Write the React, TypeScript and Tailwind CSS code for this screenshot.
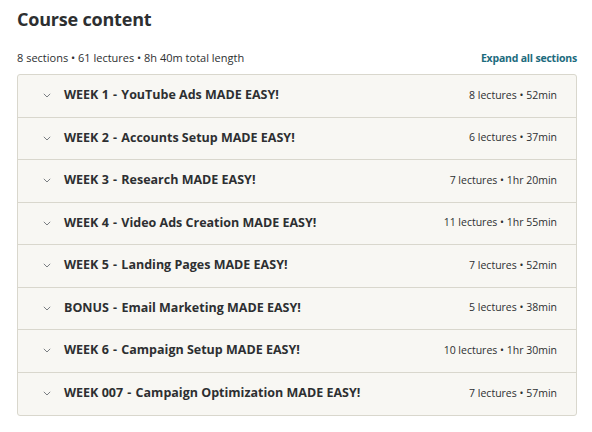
import React from "react";

const sections = [
  { title: "WEEK 1 - YouTube Ads MADE EASY!", meta: "8 lectures • 52min" },
  { title: "WEEK 2 - Accounts Setup MADE EASY!", meta: "6 lectures • 37min" },
  { title: "WEEK 3 - Research MADE EASY!", meta: "7 lectures • 1hr 20min" },
  { title: "WEEK 4 - Video Ads Creation MADE EASY!", meta: "11 lectures • 1hr 55min" },
  { title: "WEEK 5 - Landing Pages MADE EASY!", meta: "7 lectures • 52min" },
  { title: "BONUS - Email Marketing MADE EASY!", meta: "5 lectures • 38min" },
  { title: "WEEK 6 - Campaign Setup MADE EASY!", meta: "10 lectures • 1hr 30min" },
  { title: "WEEK 007 - Campaign Optimization MADE EASY!", meta: "7 lectures • 57min" },
];

function Chevron() {
  return (
    <svg width="8" height="5" viewBox="0 0 8 5" className="shrink-0">
      <path d="M0.8 0.8 L4 4 L7.2 0.8" fill="none" stroke="#7b7f83" strokeWidth="1" />
    </svg>
  );
}

export default function App() {
  return (
    <div
      className="w-[592px] h-[432px] bg-white text-[#2d2f31] pl-[17px] pt-[6px]"
      style={{ fontFamily: '"Open Sans", "Noto Sans", sans-serif' }}
    >
      <div className="w-[560px]">
        <h2 className="text-[18px] font-bold leading-[26px] tracking-[-0.2px]">Course content</h2>
        <div className="flex items-end justify-between mt-[18px] mb-[8px] h-[16px]">
          <span className="text-[11px] leading-[16px]">8 sections • 61 lectures • 8h 40m total length</span>
          <span className="text-[10.5px] leading-[16px] font-bold text-[#1c6b7d] tracking-[-0.2px]">Expand all sections</span>
        </div>
        <div className="border border-[#d9d7cd] rounded-[3px] bg-[#f8f7f3]">
          {sections.map((s, i) => {
            const [head, ...rest] = s.title.split(" - ");
            return (
              <div
                key={i}
                className={`flex items-center h-[42.5px] pl-[25px] pr-[19px] ${i < sections.length - 1 ? "border-b border-[#d9d7cd]" : ""}`}
              >
                <Chevron />
                <span className="ml-[13px] text-[12.5px] font-bold flex-1 whitespace-pre">
                  {head}
                  <span className="mx-[1px]">{" - "}</span>
                  {rest.join(" - ")}
                </span>
                <span className="text-[10.5px]">{s.meta}</span>
              </div>
            );
          })}
        </div>
      </div>
    </div>
  );
}
